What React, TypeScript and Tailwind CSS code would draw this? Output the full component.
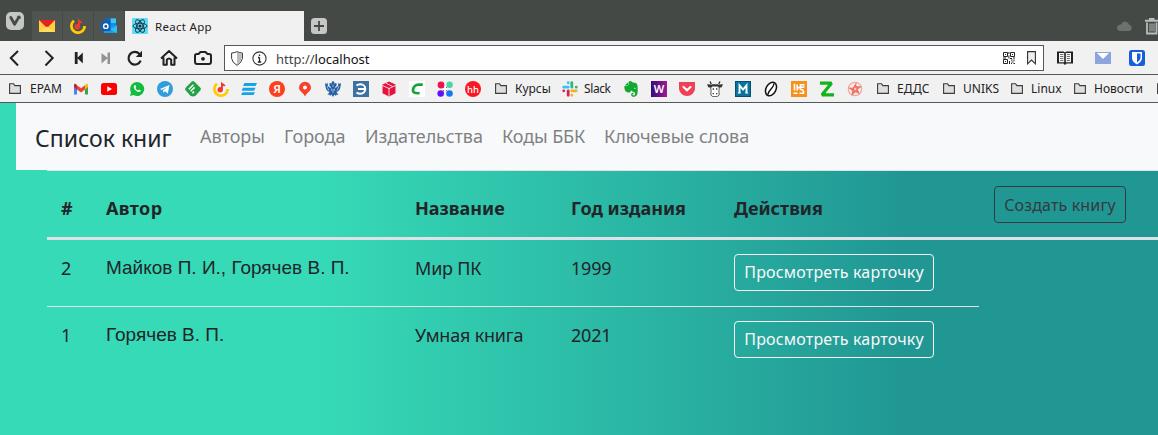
import type { ReactNode } from "react";
import { FaEvernote } from "react-icons/fa";

const Svg = ({ children, s = 16, vb = "0 0 16 16" }: { children: ReactNode; s?: number; vb?: string }) => (
  <svg width={s} height={s} viewBox={vb} fill="none" className="block shrink-0">{children}</svg>
);

const Glyph = ({ c, fill = "#fff", x = 8, y = 12, size = 11, weight = 700 }: { c: string; fill?: string; x?: number; y?: number; size?: number; weight?: number }) => (
  <text x={x} y={y} fontSize={size} fill={fill} textAnchor="middle" fontFamily="Noto Sans, sans-serif" fontWeight={weight}>{c}</text>
);

const Music = () => (
  <Svg>
    <path d="M4 2.800A6.600 6.600 0 1 0 14.600 8" stroke="#ffcc00" strokeWidth="2.700" />
    <circle cx="7.200" cy="8.800" r="2.700" fill="#f23b30" />
    <path d="M8 9V.5c.6 1.600 3.900 2 4.500 4.800L9.900 5V9z" fill="#f23b30" />
  </Svg>
);

const Folder = () => (
  <svg width="12" height="11" viewBox="0 0 12 11" className="block shrink-0">
    <path d="M.6 10.400V.700h4l1.200 1.900h5.600v7.800z" fill="#dedede" stroke="#3c3c3c" strokeWidth="1.100" />
  </svg>
);

const icons: ReactNode[] = [
  <Svg>
    <path d="M1 4v9.500h3V7z" fill="#4285f4" /><path d="M12 7v6.500h3V4z" fill="#34a853" />
    <path d="M1 4v2l3 2.400V4.200L2.800 3C1.800 2.400 1 3 1 4z" fill="#c5221f" />
    <path d="M4 4.200 8 7.300l4-3.100v4.200L8 11.500 4 8.400z" fill="#ea4335" />
    <path d="M15 4v2l-3 2.400V4.200L13.200 3C14.200 2.400 15 3 15 4z" fill="#fbbc04" />
  </Svg>,
  <Svg><rect y="2" width="16" height="12" rx="2.500" fill="#f00" /><path d="M6.300 5.300v5.400L11 8z" fill="#fff" /></Svg>,
  <Svg><path d="M8 1a7 7 0 1 1-3.400 13L1 15l1-3.600A7 7 0 0 1 8 1z" fill="#12bd3e" /><path d="M5.500 4.200c-1.600 1.200-.6 3.400 1 5s3.900 2.600 5.100 1c.4-.7-.1-1-1.600-1.700l-1 1C7.700 9 6.900 8.100 6.400 7l.8-1C6.700 4.400 6.400 3.700 5.500 4.200z" fill="#fff" /></Svg>,
  <Svg><circle cx="8" cy="8" r="8" fill="#2f9fdb" /><path d="m3 8 9.500-4-1.700 8.400-2.900-2.100-1.500 1.500-.4-2.500L10.500 6 4.900 8.900z" fill="#fff" /></Svg>,
  <Svg><path d="M6.800.6q1.200-1 2.400 0l6.200 6.200q1 1.200 0 2.400l-4.800 5.500q-2.600 1.500-5.200 0L.6 9.200q-1-1.200 0-2.400z" fill="#21a345" /><path d="m3.800 8.200 4.600-4.400M5.600 10.200l4-3.800M7.400 12.200l1.700-1.600" stroke="#fff" strokeWidth="1.500" /></Svg>,
  <Music />,
  <Svg><path d="M3.500 2H16l-1.500 3H2zM2 6.700h12.500l-1.400 3H.6zM1.500 11.300H14L12.500 14H0z" fill="#14a5e8" /></Svg>,
  <Svg><circle cx="8" cy="8" r="8" fill="#fc3f1d" /><Glyph c="Я" y={12.2} size={11.5} weight={600} /></Svg>,
  <Svg><path d="M8 .7a6 6 0 0 1 6 6C14 10.200 9.500 11.600 8 15.500 6.500 11.600 2 10.200 2 6.700a6 6 0 0 1 6-6z" fill="#f9402d" /><circle cx="8" cy="6.600" r="2" fill="#fff" /></Svg>,
  <Svg>
    <path d="M8 0 9.500 1.200 9 2.600 11.500 2v3L10 6l.5 1L13 5l.6-3.600L14.600 3 16 2l-.4 3.500-.9 3-1.600 1.800-1.700.6 2.200 2.800-2-.3L11 15l-1.500-1.500L8 16l-1.500-2.500L5 15l-.6-1.600-2 .3L4.600 11l-1.700-.7L1.300 8.500l-.9-3L0 2l1.400 1 1-1.600L3 5l2.500 2L6 6 4.500 5V2l2.500.6-.5-1.400z" fill="#2560a6" />
    <path d="m2 5 1.800 4.500M14 5l-1.800 4.500M8 3.500V6M8 8v4M6.400 7.500l.5 2.500M9.600 7.500 9.100 10" stroke="#c5d6ea" strokeWidth=".7" />
  </Svg>,
  <Svg><rect width="16" height="16" fill="#3f71a0" /><path d="M3.500 4.500Q5 3.200 7.500 3.200a4.800 4.800 0 0 1 0 9.600Q5 12.800 3.500 11.500M5 8h7" stroke="#fff" strokeWidth="2" /></Svg>,
  <Svg><path d="m8 .5 6.500 3v8.700L8 15.500l-6.500-3.300V3.500z" fill="#e4123c" /><path d="m1.500 4.500 6.500 3 6.500-3M8 7v8M5 2.200l6.500 3.200" stroke="#fff" strokeWidth=".8" /></Svg>,
  <Svg><rect width="16" height="16" fill="#fff" /><path d="M13.800 3.600H9.800C6 3.600 4.200 6.500 4 9.200c-.2 2.800 2.400 3.200 6.600 3" stroke="#13a538" strokeWidth="2.700" /></Svg>,
  <Svg>
    <path d="m4 4 8 8" stroke="#e9194b" strokeWidth="1" /><path d="M12 4 4 12" stroke="#5a35c8" strokeWidth="1" />
    <circle cx="4" cy="4" r="3.400" fill="#f1114b" /><circle cx="12.600" cy="3.800" r="3.200" fill="#4bd3a0" />
    <circle cx="3.700" cy="12.500" r="3.300" fill="#6610f2" /><circle cx="12.500" cy="12.500" r="3.300" fill="#1478f5" />
    <path d="m8.100 5.500 2.600 2.600-2.600 2.600-2.600-2.600z" fill="#fff" />
  </Svg>,
  <Svg><circle cx="8" cy="8" r="8" fill="#fb1722" /><Glyph c="hh" y={11.5} size={9.5} weight={500} /></Svg>,
];

const icons2: ReactNode[] = [
  <FaEvernote size={18} color="#13a832" className="-mx-px -mt-px block shrink-0" />,
  <Svg><defs><linearGradient id="w"><stop stopColor="#360d77" /><stop offset="1" stopColor="#a11a91" /></linearGradient></defs><rect width="16" height="16" fill="url(#w)" /><Glyph c="W" y={12} size={11} weight={600} /></Svg>,
  <Svg><path d="M0 1h16v6.500a8 7.500 0 0 1-16 0z" fill="#ef4058" /><path d="m4.500 6 3.500 3.300L11.500 6" stroke="#fff" strokeWidth="2.200" strokeLinecap="round" /></Svg>,
  <Svg>
    <path d="M3.500 4.500h9l-.6 5.500.3 4-2 1.600H5.800L3.800 14l.3-4z" fill="#fff" stroke="#333" strokeWidth=".8" />
    <path d="M0 3.200 4 3.600l1.300 2.600-3.800.2zM16 3.200 12 3.600l-1.300 2.600 3.800.2zM4.500 3.200h7v2.300h-7z" fill="#333" />
    <path d="M3 .5 4.300 3M13 .5 11.700 3M6.300 7.300v1.400M9.700 7.300v1.400M6.300 12v1.200M9.700 12v1.200" stroke="#222" strokeWidth="1.200" />
  </Svg>,
  <Svg><rect width="16" height="16" fill="#08749c" /><rect x=".5" y=".5" width="15" height="15" stroke="#07506d" /><path d="M2.800 12h3M10.200 12h3" stroke="#fff" strokeWidth="1.200" /><path d="M4.500 12V4.300L8 8.500l3.500-4.200V12" stroke="#fff" strokeWidth="1.900" /></Svg>,
  <Svg><g transform="rotate(28 8 8)"><ellipse cx="8" cy="8" rx="4.900" ry="7.300" fill="#fff" stroke="#111" strokeWidth="1.500" /><path d="M8 1.500c2.200 4-2.200 9 0 13" stroke="#111" strokeWidth="1.300" /></g></Svg>,
  <Svg><rect width="16" height="16" fill="#f5921e" /><path d="M3.500 2.800v6.700M2.500 12.200h4M6.200 3.500v6M6.200 7.500 9 6M13.500 3.800H9.500v4.700q3.500-.5 3 3.700H8.500M9.500 6.500l4-.8" stroke="#fff" strokeWidth="1.600" /></Svg>,
  <Svg><path d="M1 2.200h11.500L3 13.800h12" stroke="#12b31b" strokeWidth="3.200" strokeLinejoin="bevel" /></Svg>,
  <Svg><circle cx="8" cy="8" r="6.700" stroke="#f5a79c" strokeWidth="1.200" /><path d="M9.500.8 9.300 5l5.700.5-4.200 3 2.200 4.800-4.500-2L4.500 15l.6-5.300L.8 6.500l5 .2z" fill="#ee7668" /><circle cx="8.200" cy="8" r="1.200" fill="#f7cac3" /></Svg>,
];

const Slack = () => (
  <Svg>
    <g strokeWidth="2.800" strokeLinecap="round">
      <path d="M1.700 6.200h4.500M6.200 1.700v.2" stroke="#36c5f0" /><path d="M9.800 1.700v4.500M14.200 6.200h.1" stroke="#2eb67d" />
      <path d="M9.800 9.800h4.500M9.800 14.200v.1" stroke="#ecb22e" /><path d="M6.200 9.800v4.500M1.700 9.800h.1" stroke="#e01e5a" />
    </g>
  </Svg>
);

const folders = [
  { label: "ЕДДС", w: "w-[66px]" },
  { label: "UNIKS", w: "w-[68px]" },
  { label: "Linux", w: "w-[63px]" },
  { label: "Новости", w: "w-[83px]" },
  { label: "", w: "w-[12px]" },
];

const TabBar = () => (
  <div className="flex h-[41px] bg-[#444946]">
    <div className="w-8 pl-1.5 pt-3">
      <Svg s={18} vb="0 0 18 18"><rect width="18" height="18" rx="5" fill="#c4c7c5" /><path d="M4.800 5.500 8.600 12.200l2.800-4.700" stroke="#444946" strokeWidth="2.800" strokeLinecap="round" strokeLinejoin="round" /><circle cx="12.800" cy="5.400" r="1.900" fill="#444946" /></Svg>
    </div>
    <div className="mt-[11px] flex gap-px">
      <div className="flex w-[30px] items-center justify-center bg-[#4f5451]">
        <Svg><path d="M0 2h16v12H0z" fill="#ffcf3e" /><path d="M0 2h16L8 10z" fill="#e2231f" /><path d="m0 14 8-5.500L16 14z" fill="#ffdc60" /></Svg>
      </div>
      <div className="flex w-[30px] items-center justify-center bg-[#4f5451]"><Music /></div>
      <div className="flex w-[30px] items-center justify-center bg-[#4f5451]">
        <Svg><path d="M4 .5h11V10H4z" fill="#1490df" /><path d="M9.500.5H15V5H9.500z" fill="#41c4f5" /><path d="M4 .5h5.500V5H4z" fill="#0a64b8" /><path d="M3 8h6.500l6.500-.5V15H3z" fill="#1a9be8" /><path d="m9 11.500 7-4V15z" fill="#2dc0f4" /><rect y="3.500" width="9.500" height="9.500" rx="1" fill="#0f5cb5" /><circle cx="4.800" cy="8.200" r="2.200" stroke="#fff" strokeWidth="1.400" /></Svg>
      </div>
      <div className="flex w-[179px] items-center gap-[7px] bg-[#f1f1f1] pl-[7px]">
        <Svg><rect width="16" height="16" rx="1" fill="#5fdcf8" /><g stroke="#17313a" strokeWidth=".9"><ellipse cx="8" cy="8" rx="7" ry="2.800" /><ellipse cx="8" cy="8" rx="7" ry="2.800" transform="rotate(60 8 8)" /><ellipse cx="8" cy="8" rx="7" ry="2.800" transform="rotate(120 8 8)" /></g><circle cx="8" cy="8" r="1.500" fill="#17313a" /></Svg>
        <span className="pt-[2px] text-[11.5px] leading-4 tracking-[0.3px] text-[#222]">React App</span>
      </div>
    </div>
    <div className="ml-[7px] pt-[18px]">
      <Svg><rect width="16" height="16" rx="3.500" fill="#c4c7c5" /><path d="M8 3v10M3 8h10" stroke="#444946" strokeWidth="1.800" /></Svg>
    </div>
    <div className="ml-auto flex gap-3 overflow-hidden pt-[18px]">
      <svg width="17" height="16" viewBox="0 0 17 16"><path d="M3.500 13a3.200 3.200 0 0 1-.2-6.200C4.500 6.700 5 6.500 5.300 6a4.300 4.300 0 0 1 8 .8A3.200 3.200 0 0 1 13.500 13z" fill="#6c706e" /></svg>
      <svg width="13" height="17" viewBox="0 0 13 17" fill="none" stroke="#b9bcba"><path d="M0 2.800h13M4 1h5.500" strokeWidth="2" /><path d="M2 4.500v11h9.500v-11" strokeWidth="1.800" /><path d="M5 5.500v8M7 5.500v8M9 5.500v8" strokeWidth="1" /></svg>
    </div>
  </div>
);

const Toolbar = () => (
  <div className="flex h-[34px] border-b border-[#55585a] bg-[#f1f1f1]">
    <div className="flex w-[224px] items-center pl-[6px]">
      <Svg s={18} vb="0 0 18 18"><path d="M12 2 4.800 9l7.200 7.500" stroke="#222" strokeWidth="2" /></Svg>
      <div className="w-[16px]" />
      <Svg s={18} vb="0 0 18 18"><path d="m5.500 2 7.200 7-7.200 7.500" stroke="#222" strokeWidth="2" /></Svg>
      <div className="w-[12px]" />
      <Svg s={18} vb="0 0 18 18"><path d="M4.800 3h2.800v12H4.800zM12.800 3.500v11L7.200 9z" fill="#222" /></Svg>
      <div className="w-[9px]" />
      <Svg s={18} vb="0 0 18 18"><path d="M10.500 3.500H13V15h-2.500zM4.500 4v10.500L10.800 9z" fill="#929292" /></Svg>
      <div className="w-[11px]" />
      <Svg s={18} vb="0 0 18 18"><path d="M14.700 11.600A6.300 6.300 0 1 1 13.500 5" stroke="#222" strokeWidth="2.200" /><path d="M16 1.800V8H9.800z" fill="#222" /></Svg>
      <div className="w-4" />
      <Svg s={18} vb="0 0 18 18"><path d="M1 9.500 9 2l8 7.500M3.500 8.500v7.300h3.300v-5q2.200-2.400 4.400 0v5h3.300V8.500" stroke="#222" strokeWidth="2" strokeLinejoin="round" /></Svg>
      <div className="w-4" />
      <Svg s={18} vb="0 0 18 18"><path d="M1 6.500q0-1.500 2-1.500h1.500L6.500 3h5l2 2H15q2 0 2 1.500v6q0 2.500-2 2.500H3q-2 0-2-2.500z" stroke="#222" strokeWidth="2" strokeLinejoin="round" /><circle cx="9" cy="9.800" r="1.900" fill="#222" /></Svg>
    </div>
    <div className="mt-1 flex h-[26px] w-[820px] items-center border border-[#55585a] bg-white pl-1.5 pr-[7px]">
      <svg width="12" height="15" viewBox="0 0 12 15"><path d="M.6 2Q3 2 6 .7 9 2 11.400 2v5.500Q10.500 12 6 14.300 1.500 12 .6 7.500z" fill="#fff" stroke="#333" /><path d="M6 1.500q2.500 1 4.800 1v5Q10 11.500 6 13.600z" fill="#bbb" /></svg>
      <div className="w-[9px]" />
      <Svg s={15} vb="0 0 15 15"><circle cx="7.500" cy="7.500" r="6.600" stroke="#333" strokeWidth="1.100" /><path d="M7.500 6.500V11M7.500 3.500v1.600M6 6.500h1.500M5.800 11h3.400" stroke="#222" strokeWidth="1.300" /></Svg>
      <span className="ml-[9px] pt-[2px] text-[13px] leading-4 text-[#444]">http://<span className="text-[#111]">localhost</span></span>
      <div className="ml-auto flex items-center gap-3">
        <Svg s={12} vb="0 0 12 12"><path d="M.5.500h4v4h-4zM7.500.500h4v4h-4zM.5 7.500h4v4h-4zM2 2.500h1M9 2.500h1M2 9.500h1M5.900 0v2M5.900 3.500v3M0 6h3M7 6.500h2M10 6h2M6.500 9v3M8 8h1.500M11 7.500v1.700M8.500 10h2M8 11.500h1M10.500 11.500H12" stroke="#222" strokeWidth="1" /></Svg>
        <svg width="9" height="14" viewBox="0 0 9 14"><path d="M.6.600h7.800v12.200L4.500 9 .6 12.800z" fill="#eee" stroke="#333" strokeWidth="1.100" /></svg>
      </div>
    </div>
    <div className="flex items-center pl-[13px]">
      <Svg s={16}><path d="M0 1.500h6.500L8 2.500l1.500-1H16v12H9.500L8 15l-1.500-1.500H0z" fill="#222" /><path d="M2 3h5.200v9.200H2zM8.800 3H14v9.200H8.800z" fill="#f5f5f5" /><path d="M3 4.500h3.400M3 6.500h3.400M3 8.500h3.400M3 10.500h3.400M9.800 4.500H13M9.800 6.500H13M9.800 8.500H13M9.800 10.500H13" stroke="#777" /></Svg>
      <div className="w-[22px]" />
      <svg width="16" height="12" viewBox="0 0 16 12"><path d="M0 0h16v12H0z" fill="#8da4dc" /><path d="M2 1h12L8 7z" fill="#fff" /></svg>
      <div className="w-[18px]" />
      <Svg><rect width="16" height="16" rx="2.500" fill="#175ddc" /><path d="M3 2h10v6q0 3.500-5 6.500Q3 11.500 3 8z" fill="#fff" /><path d="M8 3.500h3.500V8q0 2.200-3.500 4.500z" fill="#175ddc" /></Svg>
    </div>
  </div>
);

const Bookmarks = () => (
  <div className="flex h-7 items-center overflow-hidden border-b border-[#55585a] bg-[#f1f1f1] text-[12px] leading-4 text-[#222]">
    <div className="flex w-[73px] shrink-0 items-center gap-[9px] pl-[9px]"><Folder /><span>EPAM</span></div>
    <div className="flex w-[422px] shrink-0 gap-3">{icons.map((n, i) => <div key={i} className="h-4 w-4">{n}</div>)}</div>
    <div className="flex w-[67px] shrink-0 items-center gap-2"><Folder /><span>Курсы</span></div>
    <div className="flex w-[61px] shrink-0 items-center gap-[6px]"><Slack /><span className="tracking-[-0.4px]">Slack</span></div>
    <div className="flex w-[254px] shrink-0 gap-3">{icons2.map((n, i) => <div key={i} className="h-4 w-4">{n}</div>)}</div>
    {folders.map((f) => (
      <div key={f.label} className={`flex shrink-0 items-center gap-2 ${f.w}`}><Folder /><span>{f.label}</span></div>
    ))}
  </div>
);

const links = [
  { t: "Авторы", w: "w-[84px]" },
  { t: "Города", w: "w-[81px]" },
  { t: "Издательства", w: "w-[137px] tracking-[-0.1px]" },
  { t: "Коды ББК", w: "w-[102px] tracking-[-0.1px]" },
  { t: "Ключевые слова", w: "w-[160px]" },
];

const books = [
  { id: 2, author: "Майков П. И., Горячев В. П.", title: "Мир ПК", year: 1999, line: "border-b" },
  { id: 1, author: "Горячев В. П.", title: "Умная книга", year: 2021, line: "" },
];

const cols = "grid grid-cols-[45px_309px_156px_163px_245px] pl-[14px]";

export default function App() {
  return (
    <div className="flex h-[435px] w-[1158px] flex-col overflow-hidden whitespace-nowrap font-['Noto_Sans',sans-serif]">
      <TabBar />
      <Toolbar />
      <Bookmarks />
      <main className="flex-1 bg-[linear-gradient(90deg,#36dab7_27.5%,#219794_78%)] text-[18px] leading-6 text-[#212529]">
        <nav className="ml-4 flex h-[67px] items-center bg-[#f8f9fb] pl-[19px]">
          <span className="w-[165px] pt-[3px] text-[23px] leading-8">Список книг</span>
          {links.map((l) => <a key={l.t} className={`pb-0.5 text-[#808182] ${l.w}`}>{l.t}</a>)}
        </nav>
        <section className="ml-[47px]">
          <div className="flex h-[70px] border-b-[3px] border-t border-[#dee2e6]">
            <div className={`${cols} pt-[25px] font-bold`}>
              <span>#</span><span className="tracking-[0.4px]">Автор</span><span>Название</span><span>Год издания</span><span>Действия</span>
            </div>
            <button className="ml-[15px] mt-[15px] h-[37px] w-[132px] rounded-[4px] border border-[#343a40] text-[16px] tracking-[0.15px] text-[#343a40]">Создать книгу</button>
          </div>
          {books.map((b) => (
            <div key={b.id} className={`${cols} h-[67px] w-[932px] border-[#dee2e6] pt-[14px] ${b.line}`}>
              <span className="pt-[2px]">{b.id}</span>
              <span className="pt-[2px] font-['Liberation_Sans',sans-serif] text-[19px]">{b.author}</span>
              <span className="pt-[2px] tracking-[-0.2px]">{b.title}</span>
              <span className="pt-[2px] tracking-[-0.2px]">{b.year}</span>
              <button className="h-[37px] w-[200px] rounded-[4px] border border-[#f8f9fa] pb-px text-[16px] tracking-[0.18px] text-[#f8f9fa]">Просмотреть карточку</button>
            </div>
          ))}
        </section>
      </main>
    </div>
  );
}
